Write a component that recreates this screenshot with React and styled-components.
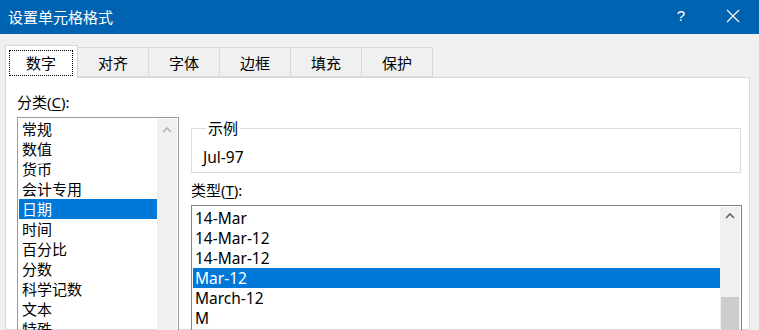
import React from "react";
import styled, { createGlobalStyle } from "styled-components";

const GlobalStyle = createGlobalStyle`
  html, body {
    margin: 0;
    padding: 0;
    background: #f0f0f0;
    font-family: "Noto Sans", "Noto Sans CJK SC", sans-serif;
    color: #000;
  }
  * { box-sizing: border-box; }
`;

const tabs = ["数字", "对齐", "字体", "边框", "填充", "保护"];

const categories = [
  "常规",
  "数值",
  "货币",
  "会计专用",
  "日期",
  "时间",
  "百分比",
  "分数",
  "科学记数",
  "文本",
  "特殊",
  "自定义",
];

const types = ["14-Mar", "14-Mar-12", "14-Mar-12", "Mar-12", "March-12", "M", "M-12"];

const Chevron = ({ color }) => (
  <svg width="10" height="6" viewBox="0 0 10 6">
    <path d="M1 5 L5 1 L9 5" fill="none" stroke={color} strokeWidth="1.6" />
  </svg>
);

const App = () => {
  return (
    <Window>
      <GlobalStyle />
      <TitleBar>
        <Title>设置单元格格式</Title>
        <TitleButtons>
          <HelpButton>?</HelpButton>
          <CloseButton>
            <svg width="14" height="14" viewBox="0 0 14 14">
              <path d="M1 1 L13 13 M13 1 L1 13" stroke="#fff" strokeWidth="1.1" />
            </svg>
          </CloseButton>
        </TitleButtons>
      </TitleBar>
      <Body>
        <TabStrip>
          {tabs.map((t, i) => (
            <Tab key={t} $active={i === 0}>
              {i === 0 ? <FocusRect>{t}</FocusRect> : t}
            </Tab>
          ))}
        </TabStrip>
        <Panel>
          <LeftColumn>
            <Label>
              分类(<u>C</u>):
            </Label>
            <ListBox $height={240} $border="#9a9a9a">
              <ListItems>
                {categories.map((c, i) => (
                  <Item key={c} $selected={i === 4} $pad={3}>
                    {c}
                  </Item>
                ))}
              </ListItems>
              <ScrollBar>
                <ScrollButton>
                  <Chevron color="#b4b4b4" />
                </ScrollButton>
              </ScrollBar>
            </ListBox>
          </LeftColumn>
          <RightColumn>
            <Sample>
              <Legend>示例</Legend>
              <SampleValue>Jul-97</SampleValue>
            </Sample>
            <Label $top={7}>
              类型(<u>T</u>):
            </Label>
            <ListBox $height={200} $border="#828282">
              <ListItems $top={1}>
                {types.map((t, i) => (
                  <Item key={i} $selected={i === 3} $pad={2} $size={15.5}>
                    {t}
                  </Item>
                ))}
              </ListItems>
              <ScrollBar>
                <ScrollButton>
                  <Chevron color="#606060" />
                </ScrollButton>
                <Thumb $offset={72} />
              </ScrollBar>
            </ListBox>
          </RightColumn>
        </Panel>
      </Body>
    </Window>
  );
};

const Window = styled.div`
  width: 759px;
  height: 330px;
  overflow: hidden;
  display: flex;
  flex-direction: column;
  background: #f0f0f0;
`;

const TitleBar = styled.div`
  height: 34px;
  background: #0063b1;
  color: #fff;
  display: flex;
  align-items: center;
  justify-content: space-between;
  padding: 0 0 0 8px;
  flex-shrink: 0;
`;

const Title = styled.div`
  font-size: 15px;
  line-height: 20px;
  margin-top: -1px;
`;

const TitleButtons = styled.div`
  display: flex;
  align-items: center;
  height: 100%;
`;

const HelpButton = styled.div`
  width: 46px;
  text-align: center;
  font-size: 15px;
  line-height: 20px;
  margin-top: -2px;
  font-family: "Liberation Sans", sans-serif;
`;

const CloseButton = styled.div`
  width: 46px;
  height: 100%;
  margin-left: 6px;
  margin-right: 3px;
  display: flex;
  align-items: center;
  justify-content: center;
  padding-bottom: 2px;
`;

const Body = styled.div`
  flex: 1;
  display: flex;
  flex-direction: column;
  padding: 11px 9px 0 5px;
  min-height: 0;
`;

const TabStrip = styled.div`
  display: flex;
  align-items: flex-end;
  height: 32px;
  position: relative;
  z-index: 1;
`;

const Tab = styled.div`
  width: ${(p) => (p.$active ? "73px" : "72px")};
  height: ${(p) => (p.$active ? "33px" : "30px")};
  margin-left: ${(p) => (p.$active ? "0" : "-1px")};
  margin-bottom: ${(p) => (p.$active ? "-1px" : "0")};
  background: ${(p) => (p.$active ? "#fff" : "#f0f0f0")};
  border: 1px solid #d9d9d9;
  border-bottom: ${(p) => (p.$active ? "none" : "1px solid #d9d9d9")};
  display: flex;
  align-items: center;
  justify-content: center;
  font-size: 15px;
  line-height: 20px;
  padding-top: ${(p) => (p.$active ? "2px" : "1px")};
  padding-right: ${(p) => (p.$active ? "2px" : "0")};
  &:first-child {
    margin-left: 0;
  }
`;

const FocusRect = styled.div`
  width: 64px;
  height: 26px;
  margin-left: 1px;
  border: 1px dotted #000;
  display: flex;
  align-items: center;
  justify-content: center;
`;

const Panel = styled.div`
  flex: 1;
  background: #fff;
  border: 1px solid #d9d9d9;
  padding: 14px 7px 0 11px;
  display: flex;
  gap: 12px;
  min-height: 0;
`;

const LeftColumn = styled.div`
  width: 162px;
  display: flex;
  flex-direction: column;
`;

const RightColumn = styled.div`
  flex: 1;
  display: flex;
  flex-direction: column;
  padding-top: 26px;
`;

const Label = styled.div`
  font-size: 15px;
  line-height: 20px;
  margin-top: ${(p) => (p.$top ? `${p.$top}px` : "0")};
  margin-bottom: 5px;
  u {
    text-underline-offset: 2px;
  }
`;

const ListBox = styled.div`
  height: ${(p) => p.$height}px;
  border: 1px solid ${(p) => p.$border};
  display: flex;
  flex-shrink: 0;
  padding: 1px;
  overflow: hidden;
`;

const ListItems = styled.div`
  flex: 1;
  display: flex;
  flex-direction: column;
  padding-top: ${(p) => (p.$top ? `${p.$top}px` : "0")};
`;

const Item = styled.div`
  height: 20px;
  line-height: 20px;
  font-size: ${(p) => p.$size || 15}px;
  padding-left: ${(p) => p.$pad}px;
  background: ${(p) => (p.$selected ? "#0078d7" : "transparent")};
  color: ${(p) => (p.$selected ? "#fff" : "#000")};
  white-space: nowrap;
`;

const ScrollBar = styled.div`
  width: 20px;
  background: #f0f0f0;
  display: flex;
  flex-direction: column;
  align-items: center;
`;

const ScrollButton = styled.div`
  width: 100%;
  height: 21px;
  display: flex;
  align-items: center;
  justify-content: center;
`;

const Thumb = styled.div`
  width: 18px;
  height: 120px;
  margin-top: ${(p) => p.$offset}px;
  background: #cdcdcd;
`;

const Sample = styled.fieldset`
  margin: 0;
  border: 1px solid #dcdcdc;
  padding: 9px 11px 5px;
  width: 550px;
`;

const Legend = styled.legend`
  font-size: 15px;
  line-height: 20px;
  padding: 0 2px;
  margin-left: 3px;
`;

const SampleValue = styled.div`
  font-size: 15.5px;
  line-height: 20px;
`;

export default App;
